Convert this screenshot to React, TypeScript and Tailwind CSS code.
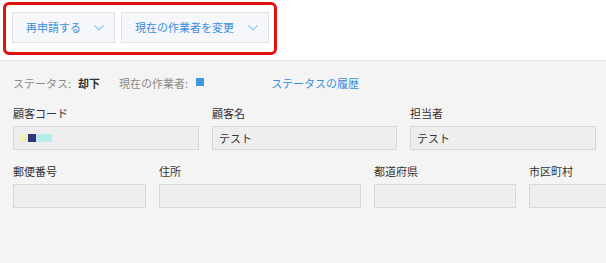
import React from 'react';

const font = { fontFamily: '"Noto Sans CJK JP", "Noto Sans", sans-serif' };

function Chevron() {
  return (
    <svg width="10" height="6" viewBox="0 0 10 6" fill="none" className="shrink-0">
      <path d="M0.5 0.5 L5 5 L9.5 0.5" stroke="#8cc4ee" strokeWidth="1.1" />
    </svg>
  );
}

function ActionButton({ label, width }: { label: string; width: string }) {
  return (
    <button
      className={`${width} h-[31px] flex items-center justify-between pl-[13px] pr-[10px] bg-[#f5f7fa] border border-[#dfe3e8] text-[11px] text-[#3a8ee0]`}
    >
      <span>{label}</span>
      <Chevron />
    </button>
  );
}

function Field({ label, width, children }: { label: string; width: string; children?: React.ReactNode }) {
  return (
    <div className={`${width} shrink-0`}>
      <div className="text-[11px] leading-[16px] text-[#333]">{label}</div>
      <div className="mt-[5px] h-[24px] bg-[#eeeeee] border border-[#d8d8d8] flex items-center pl-[6px] text-[11px] text-[#333]">
        {children}
      </div>
    </div>
  );
}

export default function App() {
  return (
    <div className="min-h-screen bg-[#f4f4f4] overflow-hidden" style={font}>
      <div className="h-[61px] bg-white border-b border-[#e6e6e6] pt-[2px] pl-[3px]">
        <div className="w-[274px] h-[53px] border-[3px] border-[#e0140c] rounded-[6px] pt-[7px] pl-[6px] flex gap-[6px]">
          <ActionButton label="再申請する" width="w-[103px]" />
          <ActionButton label="現在の作業者を変更" width="w-[148px]" />
        </div>
      </div>

      <div className="px-[13px] pt-[14px] flex items-center text-[11px] leading-[16px]">
        <span className="text-[#8a8a8a]">ステータス:</span>
        <span className="ml-[7px] font-bold text-[#333]">却下</span>
        <span className="ml-[19px] text-[#8a8a8a]">現在の作業者:</span>
        <span className="ml-[8px] w-[8px] h-[8px] bg-[#3a9ad9] mb-[3px]" />
        <span className="ml-[67px] text-[#3a8ee0]">ステータスの履歴</span>
      </div>

      <div className="px-[13px] mt-[14px] flex gap-[13px]">
        <Field label="顧客コード" width="w-[186px]">
          <div className="flex h-[8px]">
            <span className="w-[8px] bg-[#f0eebb]" />
            <span className="w-[8px] bg-[#33337a]" />
            <span className="w-[16px] bg-[#b8ecec]" />
          </div>
        </Field>
        <Field label="顧客名" width="w-[185px]">テスト</Field>
        <Field label="担当者" width="w-[186px]">テスト</Field>
      </div>

      <div className="px-[13px] mt-[13px] flex gap-[13px]">
        <Field label="郵便番号" width="w-[133px]" />
        <Field label="住所" width="w-[202px]" />
        <Field label="都道府県" width="w-[142px]" />
        <Field label="市区町村" width="w-[142px]" />
      </div>
    </div>
  );
}
